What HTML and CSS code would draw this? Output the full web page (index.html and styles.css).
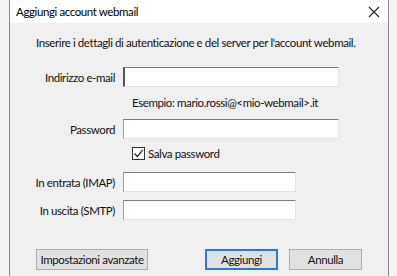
FILE: index.html
```html
<!DOCTYPE html>
<html lang="it">
<head>
  <meta charset="UTF-8" />
  <title>Aggiungi account webmail</title>
  <link rel="stylesheet" href="styles.css">
</head>
<body>
  <div class="window">
    <div class="titlebar">
      <span class="title">Aggiungi account webmail</span>
      <svg class="close" width="12" height="12" viewBox="0 0 12 12">
        <path d="M1 1 L11 11 M11 1 L1 11" stroke="#222" stroke-width="1.1" fill="none" />
      </svg>
    </div>
    <div class="content">
      <p class="intro">Inserire i dettagli di autenticazione e del server per l'account webmail.</p>

      <div class="form">
        <label class="lbl">Indirizzo e-mail</label>
        <input class="field wide focus" type="text">

        <span></span>
        <span class="hint">Esempio: mario.rossi@&lt;mio-webmail&gt;.it</span>

        <label class="lbl">Password</label>
        <input class="field wide" type="password">

        <span></span>
        <label class="check"><span class="box">
          <svg width="11" height="11" viewBox="0 0 11 11"><path d="M1.5 5.5 L4.3 8.5 L9.8 1.8" stroke="#222" stroke-width="1.2" fill="none" /></svg>
        </span>Salva password</label>

        <label class="lbl server">In entrata (IMAP)</label>
        <input class="field narrow server" type="text">

        <label class="lbl">In uscita (SMTP)</label>
        <input class="field narrow" type="text">
      </div>

      <div class="buttons">
        <button class="btn adv">Impostazioni avanzate</button>
        <div class="right">
          <button class="btn primary">Aggiungi</button>
          <button class="btn">Annulla</button>
        </div>
      </div>
    </div>
  </div>
</body>
</html>
```
FILE: styles.css
```css
* {
  box-sizing: border-box;
}

body {
  margin: 0;
  background: #f4f4f4;
  font-family: 'Segoe UI', Lato, sans-serif;
  font-size: 11.5px;
  letter-spacing: -0.4px;
  color: #111;
}

.window {
  margin-left: 9px;
  width: 380px;
  height: 276px;
  overflow: hidden;
  border-left: 1px solid #8a8a8a;
  border-right: 1px solid #8a8a8a;
  background: #f0f0f0;
}

.titlebar {
  height: 23px;
  background: #fff;
  display: flex;
  align-items: center;
  justify-content: space-between;
  padding: 0 6px 0 6px;
}

.title {
  color: #000;
}

.close {
  margin-right: 2px;
}

.content {
  padding: 12px 0 0 26px;
}

.intro {
  margin: 0 0 16px 0;
  line-height: 16px;
  white-space: nowrap;
}

.form {
  display: grid;
  grid-template-columns: 79px auto;
  column-gap: 8px;
  row-gap: 8px;
  align-items: center;
}

.lbl {
  text-align: right;
  white-space: nowrap;
  justify-self: end;
}

.field {
  height: 20px;
  background: #fff;
  border: 1px solid #e3e3e3;
  border-top-color: #7a7a7a;
  border-left-color: #a0a0a0;
  outline: none;
  padding: 0 3px;
}

.field.focus {
  border-left: 2px solid #555;
}

.wide {
  width: 216px;
}

.narrow {
  width: 173px;
}

.hint {
  padding-left: 9px;
  line-height: 16px;
  white-space: nowrap;
}

.check {
  display: flex;
  align-items: center;
  gap: 3px;
  padding-left: 9px;
  line-height: 13px;
}

.box {
  width: 13px;
  height: 13px;
  border: 1px solid #333;
  background: #fff;
  display: flex;
  align-items: center;
  justify-content: center;
}

.server {
  margin-top: 4px;
}

.buttons {
  display: flex;
  justify-content: space-between;
  margin-top: 29px;
  padding-right: 26px;
}

.right {
  display: flex;
  gap: 11px;
}

.btn {
  font-family: inherit;
  font-size: 11.5px;
  letter-spacing: -0.4px;
  color: #111;
  height: 21px;
  padding: 0;
  white-space: nowrap;
  background: #e1e1e1;
  border: 1px solid #adadad;
  min-width: 73px;
}

.adv {
  width: 112px;
}

.primary {
  border: 2px solid #2c7ad6;
  width: 71px;
}
```
